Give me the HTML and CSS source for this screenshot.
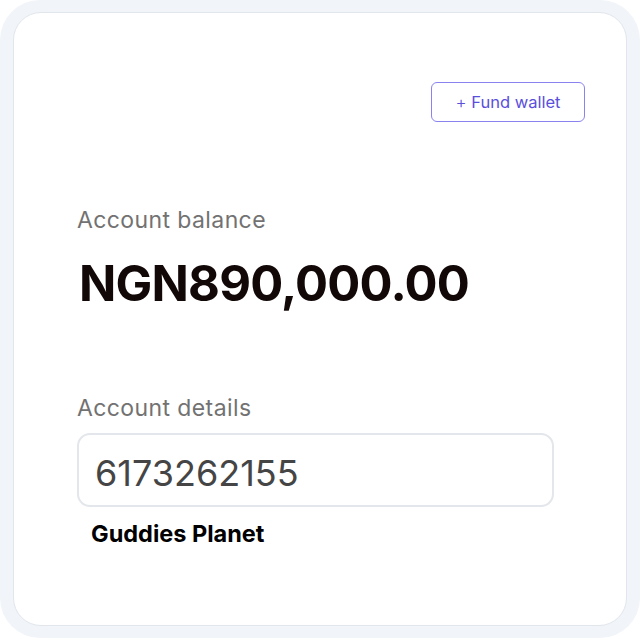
FILE: index.html
```html
<!DOCTYPE html>
<html>
<head>
<meta charset="utf-8">
<link rel="stylesheet" href="styles.css">
</head>
<body>
<div class="frame">
  <div class="card">
    <div class="actions">
      <button class="fund-btn"><span class="plus">+</span> Fund wallet</button>
    </div>
    <div class="label balance-label">Account balance</div>
    <div class="amount">NGN890,000.00</div>
    <div class="label details-label">Account details</div>
    <div class="account-box">6173262155</div>
    <div class="account-name">Guddies Planet</div>
  </div>
</div>
</body>
</html>
```
FILE: styles.css
```css
* { box-sizing: border-box; }
html, body { margin: 0; padding: 0; background: #ffffff; }
body { font-family: Inter, "Noto Sans", sans-serif; }
.frame {
  width: 640px;
  height: 638px;
  background: #f1f4f8;
  border-radius: 40px;
  padding: 12px 13px 12px 13px;
}
.card {
  background: #ffffff;
  border: 1px solid #e1e6ec;
  border-radius: 28px;
  height: 614px;
  padding: 69px 41px 0 63px;
}
.actions { display: flex; justify-content: flex-end; }
.fund-btn {
  width: 154px;
  height: 40px;
  border: 1px solid #8a83ef;
  border-radius: 6px;
  background: #fff;
  color: #5a4fdc;
  font-family: Inter, sans-serif;
  font-size: 16.5px;
  font-weight: 400;
  padding: 0;
}
.plus { font-weight: 300; font-size: 17px; }
.label {
  color: #727272;
  font-size: 23px;
  line-height: 28px;
  letter-spacing: 0.4px;
}
.balance-label { margin-top: 84px; }
.amount {
  margin-top: 20px;
  margin-left: 2px;
  font-size: 49px;
  font-weight: 700;
  line-height: 60px;
  color: #120808;
  letter-spacing: -0.8px;
}
.details-label { margin-top: 80px; }
.account-box {
  margin-top: 11px;
  width: 477px;
  height: 74px;
  border: 2px solid #e3e6ea;
  border-radius: 13px;
  font-size: 36px;
  color: #454545;
  padding: 6px 16px 0;
  line-height: 64px;
}
.account-name {
  margin-top: 13px;
  margin-left: 14px;
  font-size: 23.5px;
  line-height: 28px;
  font-weight: 700;
  color: #000;
}
```
